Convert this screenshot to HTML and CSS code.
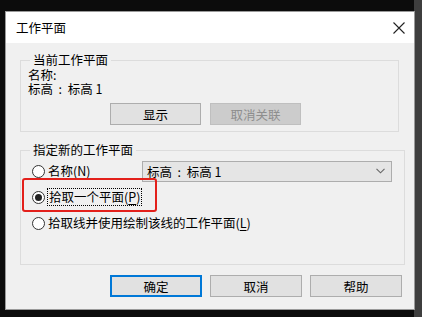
FILE: index.html
```html
<!DOCTYPE html>
<html lang="zh-CN">
<head>
    <meta charset="UTF-8">
    <title>工作平面</title>
    <link rel="stylesheet" href="styles.css">
</head>
<body>

<div class="dialog">
    <div class="titlebar">
        <span class="title">工作平面</span>
        <svg class="close" width="12" height="12" viewBox="0 0 12 12">
            <path d="M0.5 0.5 L11.5 11.5 M11.5 0.5 L0.5 11.5" stroke="#222" stroke-width="1.1" fill="none"/>
        </svg>
    </div>

    <div class="dialog-body">
        <!-- groupe : plan courant -->
        <fieldset class="group group-current">
            <legend>当前工作平面</legend>
            <div class="info">名称:</div>
            <div class="info">标高&nbsp;&nbsp;:&nbsp;&nbsp;标高 1</div>
            <div class="btn-row">
                <button class="btn">显示</button>
                <button class="btn" disabled>取消关联</button>
            </div>
        </fieldset>

        <!-- groupe : nouveau plan -->
        <fieldset class="group group-new">
            <legend>指定新的工作平面</legend>
            <div class="option-row">
                <label class="option option-name">
                    <span class="radio"></span>
                    <span>名称(<u>N</u>)</span>
                </label>
                <div class="combo">
                    <span>标高&nbsp;&nbsp;:&nbsp;&nbsp;标高 1</span>
                    <svg class="chevron" width="9" height="6" viewBox="0 0 9 6">
                        <path d="M0.5 0.8 L4.5 4.8 L8.5 0.8" stroke="#666" stroke-width="1.1" fill="none"/>
                    </svg>
                </div>
            </div>
            <div class="option-row">
                <label class="option">
                    <span class="radio checked"></span>
                    <span class="focus">拾取一个平面(<u>P</u>)</span>
                </label>
            </div>
            <div class="option-row">
                <label class="option">
                    <span class="radio"></span>
                    <span>拾取线并使用绘制该线的工作平面(<u>L</u>)</span>
                </label>
            </div>
        </fieldset>

        <div class="footer">
            <button class="btn btn-default">确定</button>
            <button class="btn">取消</button>
            <button class="btn">帮助</button>
        </div>
    </div>

    <div class="highlight"></div>
</div>

</body>
</html>
```

FILE: styles.css
```css
body {
    margin: 0;
    height: 317px;
    background-color: #0c0c0c;
    background-image: linear-gradient(to right, #0c0c0c 414px, #3e3e3e 414px);
    font-family: "Noto Sans CJK SC", "Noto Sans", sans-serif;
    font-size: 12.5px;
    color: #000;
    overflow: hidden;
}
.dialog {
    position: relative;
    box-sizing: border-box;
    width: 410px;
    height: 299px;
    margin: 11px 0 0 5px;
    background-color: #f0f0f0;
    border: 1px solid #9a9a9a;
}
.titlebar {
    height: 31px;
    background-color: #fff;
    display: flex;
    align-items: center;
    justify-content: space-between;
    padding: 0 9px 0 10px;
}
.title {
    line-height: 16px;
}
.close {
    display: block;
}
.dialog-body {
    display: flex;
    flex-direction: column;
}
.group {
    box-sizing: border-box;
    margin: 0 0 0 14px;
    border: 1px solid #dcdcdc;
    padding: 0 7px;
    min-width: 0;
}
.group legend {
    padding: 0 3px;
    margin-left: 2px;
    line-height: 16px;
}
.group-current {
    width: 379px;
    margin-top: 9px;
    padding-bottom: 6px;
}
.group-new {
    width: 385px;
    margin-top: 10px;
    padding-bottom: 28px;
}
.info {
    line-height: 14px;
}
.btn-row {
    display: flex;
    gap: 9px;
    margin: 7px 0 0 82px;
}
.btn {
    box-sizing: border-box;
    width: 91px;
    height: 22px;
    padding: 0;
    font-family: inherit;
    font-size: 12.5px;
    color: #000;
    background-color: #e1e1e1;
    border: 1px solid #adadad;
}
.btn:disabled {
    background-color: #cccccc;
    border-color: #bfbfbf;
    color: #8e8e8e;
}
.btn-default {
    border: 2px solid #0078d7;
}
.option-row {
    height: 26px;
    display: flex;
    align-items: center;
}
.option {
    display: flex;
    align-items: center;
    gap: 3px;
    padding-left: 4px;
    line-height: 16px;
}
.option-name {
    width: 110px;
}
.option u {
    text-underline-offset: 2px;
}
.radio {
    box-sizing: border-box;
    width: 13px;
    height: 13px;
    border: 1px solid #333;
    border-radius: 50%;
    background-color: #fff;
    display: flex;
    align-items: center;
    justify-content: center;
}
.radio.checked::after {
    content: "";
    width: 7px;
    height: 7px;
    border-radius: 50%;
    background-color: #222;
}
.focus {
    outline: 1px dotted #000;
    outline-offset: 0;
    padding: 0 1px;
}
.combo {
    box-sizing: border-box;
    width: 250px;
    height: 21px;
    background-color: #e5e5e5;
    border: 1px solid #adadad;
    display: flex;
    align-items: center;
    justify-content: space-between;
    padding: 0 6px 0 4px;
}
.chevron {
    display: block;
}
.footer {
    display: flex;
    justify-content: flex-end;
    gap: 8px;
    margin-top: 10px;
    padding-right: 12px;
}
.footer .btn {
    width: 92px;
}
/* annotation rouge */
.highlight {
    position: absolute;
    left: 16px;
    top: 166px;
    width: 135px;
    height: 34px;
    box-sizing: border-box;
    border: 2px solid #e3201b;
    border-radius: 3px;
}
```
